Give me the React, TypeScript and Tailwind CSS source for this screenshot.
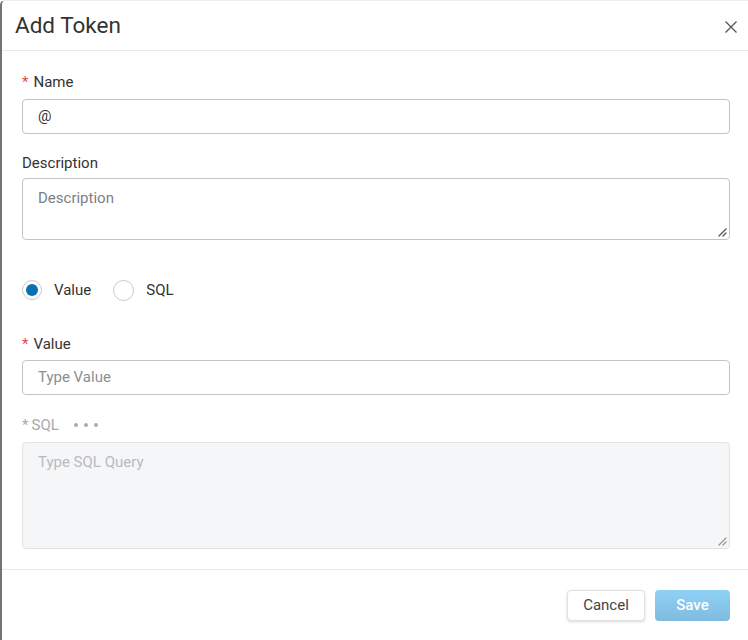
import React from "react";

function ResizeGrip({ color }: { color: string }) {
  return (
    <svg className="absolute bottom-[2px] right-[2px]" width="10" height="10" viewBox="0 0 10 10">
      <path d="M9 2 L2 9 M9 6 L6 9" stroke={color} strokeWidth="1.3" strokeLinecap="round" />
    </svg>
  );
}

function Label({ text, required, disabled }: { text: string; required?: boolean; disabled?: boolean }) {
  return (
    <div className={`flex h-5 items-center text-[15px] ${disabled ? "text-[#a9a9a9]" : "text-[#333]"}`}>
      {required && <span className={`mr-[5px] ${disabled ? "text-[#a9a9a9]" : "text-[#e5484d]"}`}>*</span>}
      {text}
    </div>
  );
}

export default function App() {
  return (
    <div className="min-h-[640px] w-[748px] bg-white" style={{ fontFamily: "Roboto, 'Noto Sans', sans-serif" }}>
      <div className="flex h-[640px] flex-col rounded-tl-[5px] border-l-2 border-t border-l-[#747474] border-t-[#ececec] bg-white">
        <div className="flex h-[50px] shrink-0 items-center justify-between border-b border-[#e8e8e8] pl-[13px] pr-[10px]">
          <h1 className="text-[22.5px] font-normal text-[#333]">Add Token</h1>
          <svg width="14" height="14" viewBox="0 0 14 14" className="mt-[2px]">
            <path d="M1.5 1.5 L12.5 12.5 M12.5 1.5 L1.5 12.5" stroke="#555" strokeWidth="1.3" />
          </svg>
        </div>

        <div className="flex-1 pl-[20px] pr-[18px] pt-[21px]">
          <Label text="Name" required />
          <div className="mt-[7px] flex h-[35px] items-center rounded-[4px] border border-[#c4c4c4] px-[15px] text-[15px] text-[#333]">
            @
          </div>

          <div className="mt-[19px]">
            <Label text="Description" />
          </div>
          <div className="relative mt-[5px] h-[62px] rounded-[4px] border border-[#c4c4c4] px-[15px] pt-[8px] text-[15px] text-[#7b8085]">
            Description
            <ResizeGrip color="#555" />
          </div>

          <div className="mt-[40px] flex h-5 items-center text-[15px] text-[#333]">
            <span className="flex h-5 w-5 items-center justify-center rounded-full border border-[#c9c9c9]">
              <span className="h-3 w-3 rounded-full bg-[#0a70b4]" />
            </span>
            <span className="ml-[12px]">Value</span>
            <span className="ml-[22px] h-[21px] w-[21px] rounded-full border border-[#c9c9c9]" />
            <span className="ml-[12px]">SQL</span>
          </div>

          <div className="mt-[34px]">
            <Label text="Value" required />
          </div>
          <div className="mt-[6px] flex h-[35px] items-center rounded-[4px] border border-[#c4c4c4] px-[15px] text-[15px] text-[#8a8f94]">
            Type Value
          </div>

          <div className="mt-[20px] flex h-5 items-center text-[15px] text-[#a9a9a9]">
            <span className="mr-[3px]">*</span>SQL
            <span className="ml-[15px] flex gap-[6px]">
              <span className="h-[4px] w-[4px] rounded-full bg-[#acacac]" />
              <span className="h-[4px] w-[4px] rounded-full bg-[#acacac]" />
              <span className="h-[4px] w-[4px] rounded-full bg-[#acacac]" />
            </span>
          </div>
          <div className="relative mt-[7px] h-[107px] rounded-[4px] border border-[#e1e3e5] bg-[#f5f6f7] px-[15px] pt-[8px] text-[15px] text-[#b8bbbe]">
            Type SQL Query
            <ResizeGrip color="#999" />
          </div>
        </div>

        <div className="flex h-[71px] shrink-0 items-start justify-end gap-[10px] border-t border-[#e8e8e8] pr-[18px] pt-[20px]">
          <button className="h-[31px] w-[78px] rounded-[4px] border border-[#e0e0e0] bg-white text-[15px] text-[#444] shadow-[0_1px_3px_rgba(0,0,0,0.15)]">
            Cancel
          </button>
          <button className="h-[31px] w-[75px] rounded-[4px] bg-gradient-to-b from-[#8fd1f6] to-[#7fbbdf] text-[15px] font-medium text-white">
            Save
          </button>
        </div>
      </div>
    </div>
  );
}
